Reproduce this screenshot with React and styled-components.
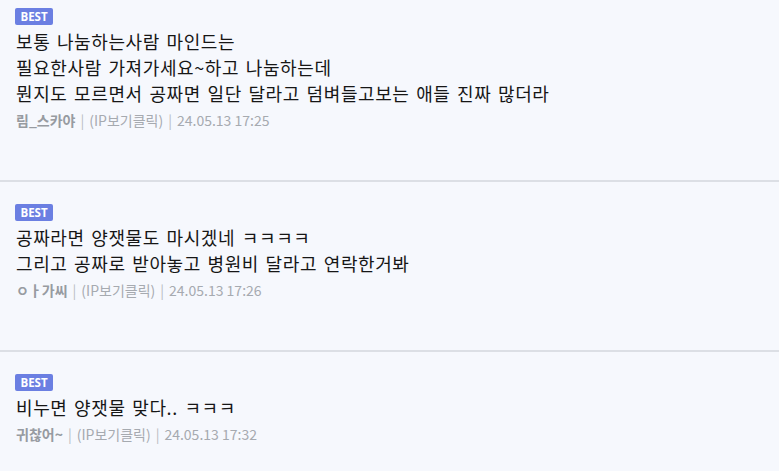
import React from 'react';
import styled, { createGlobalStyle } from 'styled-components';

const GlobalStyle = createGlobalStyle`
    html, body {
        margin: 0;
        padding: 0;
        background: #f6f8fd;
    }

    body {
        font-family: "Noto Sans CJK KR", "Noto Sans", sans-serif;
        color: #222;
    }
`;

const comments = [
    {
        lines: [
            '보통 나눔하는사람 마인드는',
            '필요한사람 가져가세요~하고 나눔하는데',
            '뭔지도 모르면서 공짜면 일단 달라고 덤벼들고보는 애들 진짜 많더라',
        ],
        name: '림_스카야',
        date: '24.05.13 17:25',
    },
    {
        lines: [
            '공짜라면 양잿물도 마시겠네 ㅋㅋㅋㅋ',
            '그리고 공짜로 받아놓고 병원비 달라고 연락한거봐',
        ],
        name: 'ㅇㅏ가씨',
        date: '24.05.13 17:26',
    },
    {
        lines: ['비누면 양잿물 맞다.. ㅋㅋㅋ'],
        name: '귀찮어~',
        date: '24.05.13 17:32',
    },
];

const App = () => {
    return (
        <>
            <GlobalStyle />
            <List>
                {comments.map((c, i) => (
                    <Comment key={i}>
                        <Badge>BEST</Badge>
                        <Body>
                            {c.lines.map((line, j) => (
                                <p key={j}>{line}</p>
                            ))}
                        </Body>
                        <Meta>
                            <Name>{c.name}</Name>
                            <Bar>|</Bar>
                            <span>(IP보기클릭)</span>
                            <Bar>|</Bar>
                            <span>{c.date}</span>
                        </Meta>
                    </Comment>
                ))}
            </List>
        </>
    );
};

/* LIST */
const List = styled.div`
    display: flex;
    flex-direction: column;
`;

/* COMMENT */
const Comment = styled.div`
    display: flex;
    flex-direction: column;
    align-items: flex-start;
    padding: 22px 15px 50px 16px;
    border-bottom: 2px solid #dcdfe5;

    &:first-child {
        padding-top: 8px;
    }
`;

const Badge = styled.span`
    display: flex;
    align-items: center;
    justify-content: center;
    margin-left: -1px;
    width: 38px;
    height: 17px;
    border-radius: 2px;
    background: #6b7fe2;
    color: #fff;
    font-family: "Open Sans", "Noto Sans", sans-serif;
    font-size: 11.5px;
    font-weight: 700;
`;

const Body = styled.div`
    margin-top: 3px;

    p {
        margin: 0;
        font-size: 18px;
        line-height: 26px;
        letter-spacing: 0.6px;
        word-spacing: 2px;
        color: #161616;
        white-space: nowrap;
    }
`;

const Meta = styled.div`
    display: flex;
    align-items: center;
    gap: 5px;
    margin-top: 4px;
    height: 20px;
    font-size: 14px;
    color: #a6aab0;
`;

const Name = styled.span`
    font-weight: 700;
    color: #979ba1;
`;

const Bar = styled.span`
    color: #b8bcc2;
`;

export default App;
